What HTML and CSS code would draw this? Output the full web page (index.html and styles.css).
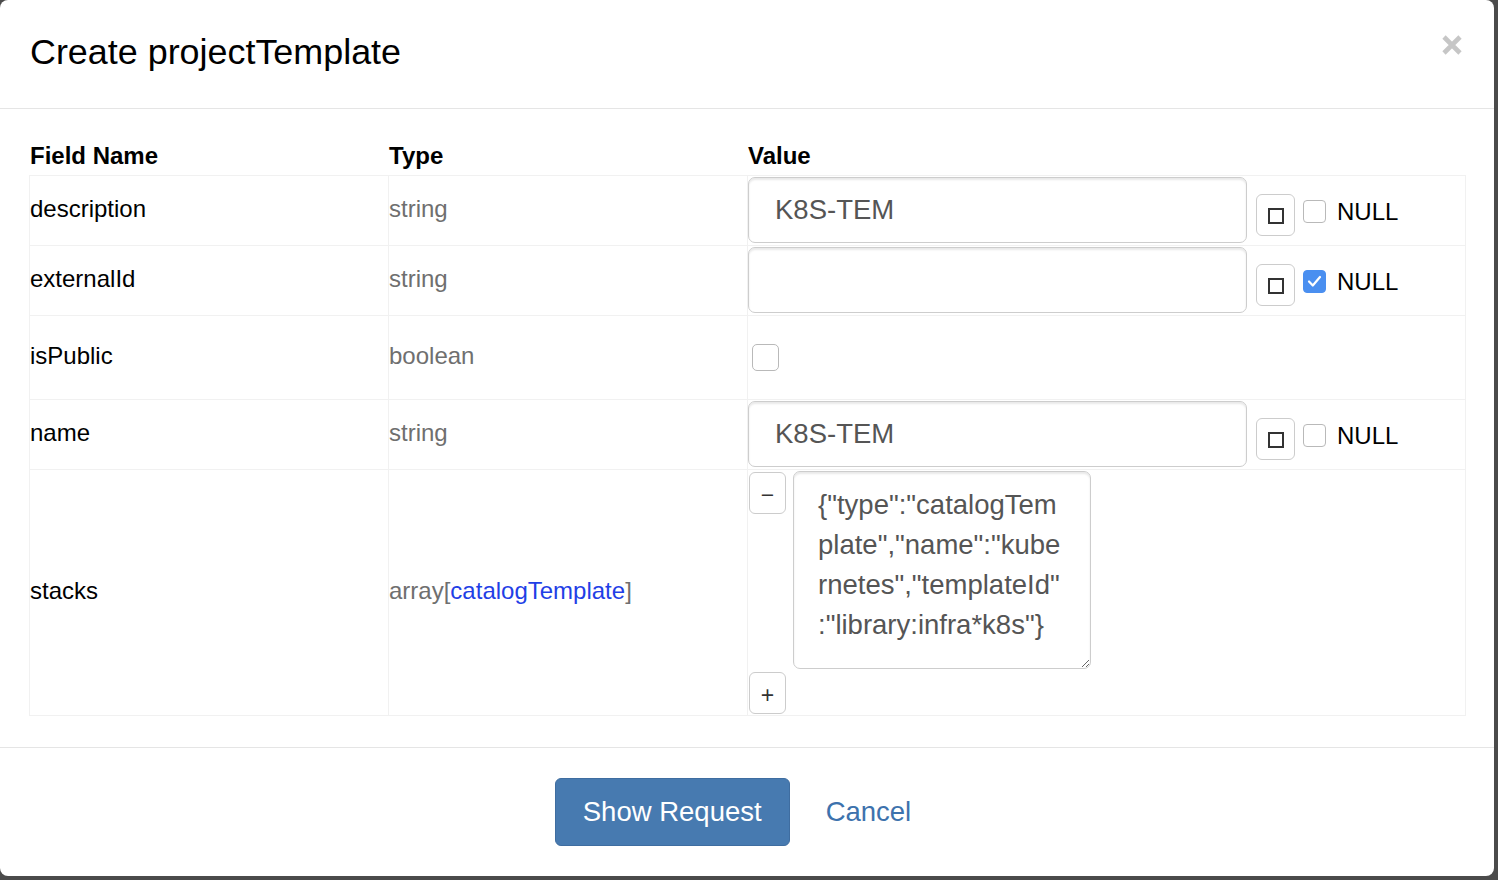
FILE: index.html
```html
<!DOCTYPE html>
<html lang="en">
<head>
<meta charset="utf-8">
<title>Create projectTemplate</title>
<link rel="stylesheet" href="styles.css">
</head>
<body>
<div class="modal">
  <div class="modal-header">
    <h4 class="modal-title">Create projectTemplate</h4>
    <button class="close" aria-label="Close">
      <svg width="22" height="22" viewBox="0 0 22 22"><path d="M3 3 L19 19 M19 3 L3 19" stroke="#c6c6c6" stroke-width="4.6" fill="none"/></svg>
    </button>
  </div>
  <div class="modal-body">
    <div class="grid-head">
      <div class="th">Field Name</div>
      <div class="th">Type</div>
      <div class="th">Value</div>
    </div>
    <div class="grid">
      <div class="td name r70">description</div>
      <div class="td type r70">string</div>
      <div class="td value r70">
        <input class="text-input" type="text" value="K8S-TEM">
        <div class="extras">
          <button class="sq-btn"><span class="sq"></span></button>
          <span class="cb"></span>
          <span class="null">NULL</span>
        </div>
      </div>

      <div class="td name r70">externalId</div>
      <div class="td type r70">string</div>
      <div class="td value r70">
        <input class="text-input" type="text" value="">
        <div class="extras">
          <button class="sq-btn"><span class="sq"></span></button>
          <span class="cb checked"><svg width="23" height="23" viewBox="0 0 23 23"><path d="M6 11.5 L9.8 15.5 L17 7" stroke="#fff" stroke-width="2.2" fill="none" stroke-linecap="round" stroke-linejoin="round"/></svg></span>
          <span class="null">NULL</span>
        </div>
      </div>

      <div class="td name r84">isPublic</div>
      <div class="td type r84">boolean</div>
      <div class="td value r84">
        <span class="cb big"></span>
      </div>

      <div class="td name r70">name</div>
      <div class="td type r70">string</div>
      <div class="td value r70">
        <input class="text-input" type="text" value="K8S-TEM">
        <div class="extras">
          <button class="sq-btn"><span class="sq"></span></button>
          <span class="cb"></span>
          <span class="null">NULL</span>
        </div>
      </div>

      <div class="td name r246">stacks</div>
      <div class="td type r246">array[<a class="link" href="#">catalogTemplate</a>]</div>
      <div class="td value r246 arr">
        <div class="arr-row">
          <button class="pm-btn minus">&minus;</button>
          <textarea class="ta">{"type":"catalogTemplate","name":"kubernetes","templateId":"library:infra*k8s"}</textarea>
        </div>
        <button class="pm-btn plus">+</button>
      </div>
    </div>
  </div>
  <div class="modal-footer">
    <button class="btn-primary">Show Request</button>
    <a class="btn-link" href="#">Cancel</a>
  </div>
</div>
</body>
</html>
```
FILE: styles.css
```css
* { box-sizing: border-box; }
html, body { margin: 0; padding: 0; }
body {
  background: #4b4b4b;
  font-family: "Liberation Sans", Arial, sans-serif;
  color: #000;
  width: 1498px;
  height: 880px;
  overflow: hidden;
}
.modal {
  width: 1494px;
  height: 876px;
  background: #fff;
  border-radius: 8px;
  overflow: hidden;
}
.modal-header {
  display: flex;
  justify-content: space-between;
  align-items: flex-start;
  padding: 32px 31px 36px 30px;
  border-bottom: 1px solid #e5e5e5;
  height: 109px;
}
.modal-title {
  margin: 0;
  font-size: 35.9px;
  font-weight: normal;
  line-height: 40px;
}
.close {
  margin-top: 2px;
  border: 0;
  background: none;
  padding: 0;
  width: 22px;
  height: 22px;
}
.close svg { display: block; }
.modal-body {
  padding: 30px 0 31px 29px;
  height: 638px;
}
.grid-head {
  display: grid;
  grid-template-columns: 359px 359px 718px;
  padding-left: 1px;
}
.th {
  font-weight: bold;
  font-size: 24px;
  line-height: 34px;
  padding-bottom: 2px;
}
.grid {
  display: grid;
  grid-template-columns: 360px 359px 718px;
  width: 1437px;
  border-top: 1px solid #f1f1f1;
}
.td {
  border-bottom: 1px solid #f1f1f1;
  border-right: 1px solid #f1f1f1;
  font-size: 24px;
  line-height: 34px;
  display: flex;
  align-items: center;
}
.td.name, .td.type { padding-bottom: 3px; }
.td.name { border-left: 1px solid #f1f1f1; }
.r70 { height: 70px; }
.r84 { height: 84px; }
.r246 { height: 246px; }
.type { color: #6f6f6f; }
.link { color: #1f3fe6; text-decoration: none; }
.value { padding-left: 0; }
.text-input {
  width: 499px;
  height: 66px;
  margin-top: -1px;
  border: 1px solid #cdcdcd;
  border-radius: 7px;
  box-shadow: inset 0 2px 2px rgba(0,0,0,0.09);
  font-family: "Liberation Sans", Arial, sans-serif;
  font-size: 27.5px;
  color: #555;
  padding: 0 26px;
  outline: none;
}
.extras {
  display: flex;
  align-items: center;
  margin-top: 8px;
  margin-left: 9px;
}
.sq-btn {
  width: 39px;
  height: 42px;
  border: 1px solid #cccccc;
  border-radius: 6px;
  background: #fff;
  padding: 0;
  display: flex;
  align-items: center;
  justify-content: center;
}
.sq {
  display: block;
  width: 16px;
  height: 16px;
  border: 2.6px solid #333;
  margin-top: 3px;
}
.cb {
  display: inline-block;
  width: 23px;
  height: 23px;
  border: 1px solid #b9b9b9;
  border-radius: 4px;
  background: #fff;
  margin-left: 8px;
  margin-top: -6px;
}
.cb.checked {
  background: #4a8ff0;
  border-color: #4a8ff0;
  position: relative;
}
.cb.checked svg { position: absolute; left: -1px; top: -1px; }
.null {
  font-size: 24px;
  margin-left: 11px;
  margin-top: -5px;
}
.cb.big {
  width: 27px;
  height: 27px;
  border-radius: 5px;
  margin: 0 0 0 4px;
}
.arr {
  flex-direction: column;
  align-items: flex-start;
  justify-content: flex-start;
  padding-top: 1px;
}
.arr-row {
  display: flex;
  align-items: flex-start;
}
.pm-btn {
  width: 37px;
  height: 42px;
  border: 1px solid #cccccc;
  border-radius: 6px;
  background: #fff;
  font-family: "Liberation Sans", Arial, sans-serif;
  font-size: 23px;
  color: #333;
  padding: 3px 0 0;
  line-height: 38px;
}
.minus { margin: 1px 7px 0 1px; }
.plus { margin: 3px 0 0 1px; }
.ta {
  width: 298px;
  height: 198px;
  border: 1px solid #cdcdcd;
  border-radius: 7px;
  box-shadow: inset 0 2px 2px rgba(0,0,0,0.09);
  font-family: "Liberation Sans", Arial, sans-serif;
  font-size: 27.5px;
  line-height: 40px;
  color: #555;
  padding: 13px 24px 0 24px;
  word-break: break-all;
  line-break: anywhere;
  overflow-wrap: anywhere;
  overflow: hidden;
  outline: none;
  margin: 0;
  display: block;
}
.modal-footer {
  border-top: 1px solid #e5e5e5;
  padding: 30px 0;
  display: flex;
  justify-content: center;
  gap: 10px;
}
.btn-primary {
  height: 68px;
  padding: 0 27px;
  margin-left: -2px;
  background: #477ab0;
  border: 1px solid #3f6da0;
  border-radius: 6px;
  color: #fff;
  font-family: "Liberation Sans", Arial, sans-serif;
  font-size: 27.5px;
}
.btn-link {
  height: 68px;
  padding: 0 26px;
  display: flex;
  align-items: center;
  color: #3d72ad;
  font-size: 27.5px;
  text-decoration: none;
}
```
